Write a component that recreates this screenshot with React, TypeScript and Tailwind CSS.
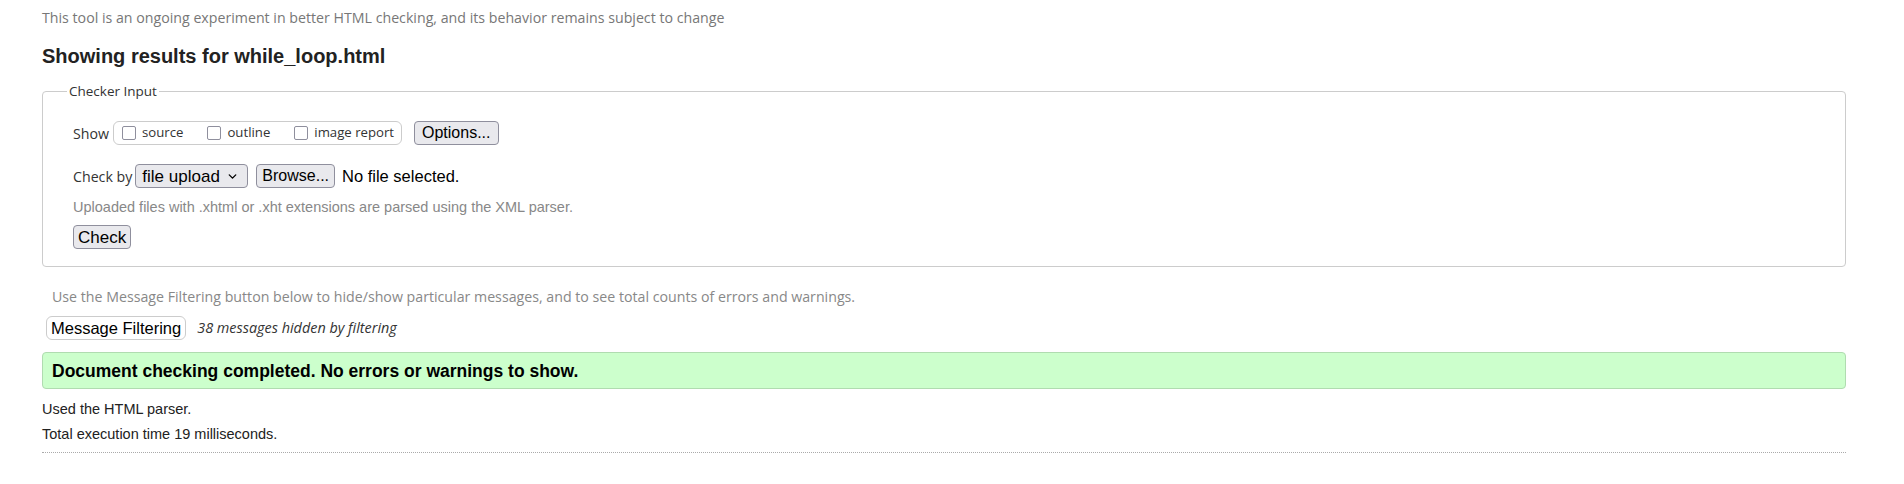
import { ChevronDown } from 'lucide-react';

const segoe = "font-['Open_Sans',sans-serif]";
const arial = "font-['Liberation_Sans',Arial,sans-serif]";

function Checkbox({ label }: { label: string }) {
  return (
    <label className="flex items-center">
      <span className="w-[14px] h-[14px] border border-[#8f8f9d] rounded-[2px] bg-white mr-[6px]"></span>
      <span className={`${segoe} text-[13.2px] text-[#333]`}>{label}</span>
    </label>
  );
}

export default function App() {
  const btn = `${arial} text-[16px] text-black bg-[#e9e9ed] border border-[#8f8f9d] rounded-[4px] h-[24px] flex items-center`;

  return (
    <div className="w-full h-[484px] bg-white pl-[42px] pr-[58px] overflow-hidden">
      <p className={`${segoe} text-[14.2px] text-[#777] pt-[8px] leading-[20px]`}>
        This tool is an ongoing experiment in better HTML checking, and its behavior remains subject to change
      </p>
      <h2 className={`${arial} font-bold text-[20px] text-[#222] mt-[16px] leading-[24px]`}>
        Showing results for while_loop.html
      </h2>

      {/* Checker Input */}
      <fieldset className="mt-[13px] border border-[#ccc] rounded-[4px] pl-[30px] pb-[17px] pt-[19px]">
        <legend className={`${segoe} text-[13.5px] text-[#333] ml-[-6px] px-[2px]`}>Checker Input</legend>

        <div className="flex items-center h-[26px]">
          <span className={`${segoe} text-[14.2px] text-[#333] mr-[4px]`}>Show</span>
          <div className="flex items-center w-[289px] h-[24px] border border-[#ccc] rounded-[6px] pl-[8px] gap-[24px]">
            <Checkbox label="source" />
            <Checkbox label="outline" />
            <Checkbox label="image report" />
          </div>
          <button className={`${btn} ml-[12px] px-[7px]`}>Options...</button>
        </div>

        <div className="flex items-center h-[26px] mt-[17px]">
          <span className={`${segoe} text-[14.2px] text-[#333] mr-[3px]`}>Check by</span>
          <div className={`${btn} w-[113px] pl-[6px] justify-between pr-[8px]`}>
            <span className="text-[17px]">file upload</span>
            <ChevronDown className="w-[13px] h-[13px] text-black" strokeWidth={2.5} />
          </div>
          <button className={`${btn} ml-[8px] px-[5px] text-[16.5px]`}>Browse...</button>
          <span className={`${arial} text-[16.5px] text-black ml-[7px]`}>No file selected.</span>
        </div>

        <p className={`${arial} text-[14.5px] text-[#888] mt-[8px] leading-[20px]`}>
          Uploaded files with .xhtml or .xht extensions are parsed using the XML parser.
        </p>
        <button className={`${btn} mt-[8px] px-[4px] text-[17px]`}>Check</button>
      </fieldset>

      <p className={`${segoe} text-[14.2px] text-[#888] ml-[10px] mt-[20px] leading-[20px]`}>
        Use the Message Filtering button below to hide/show particular messages, and to see total counts of errors and warnings.
      </p>

      <div className="flex items-center mt-[9px] ml-[4px]">
        <button className={`${arial} text-[16.5px] text-black bg-white border border-[#ccc] rounded-[6px] h-[24px] px-[4px] flex items-center`}>
          Message Filtering
        </button>
        <span className={`${segoe} italic text-[14.4px] text-[#333] ml-[11px]`}>38 messages hidden by filtering</span>
      </div>

      <div className="mt-[12px] h-[37px] bg-[#ccffcc] border border-[#b0dcb0] rounded-[4px] flex items-center pl-[9px]">
        <span className={`${arial} font-bold text-[17.5px] text-black`}>
          Document checking completed. No errors or warnings to show.
        </span>
      </div>

      <p className={`${arial} text-[14.5px] text-[#222] mt-[10px] leading-[20px]`}>Used the HTML parser.</p>
      <p className={`${arial} text-[14.5px] text-[#222] mt-[5px] leading-[20px]`}>Total execution time 19 milliseconds.</p>
      <div className="mt-[8px] border-t border-dotted border-[#aaa]"></div>
    </div>
  );
}
